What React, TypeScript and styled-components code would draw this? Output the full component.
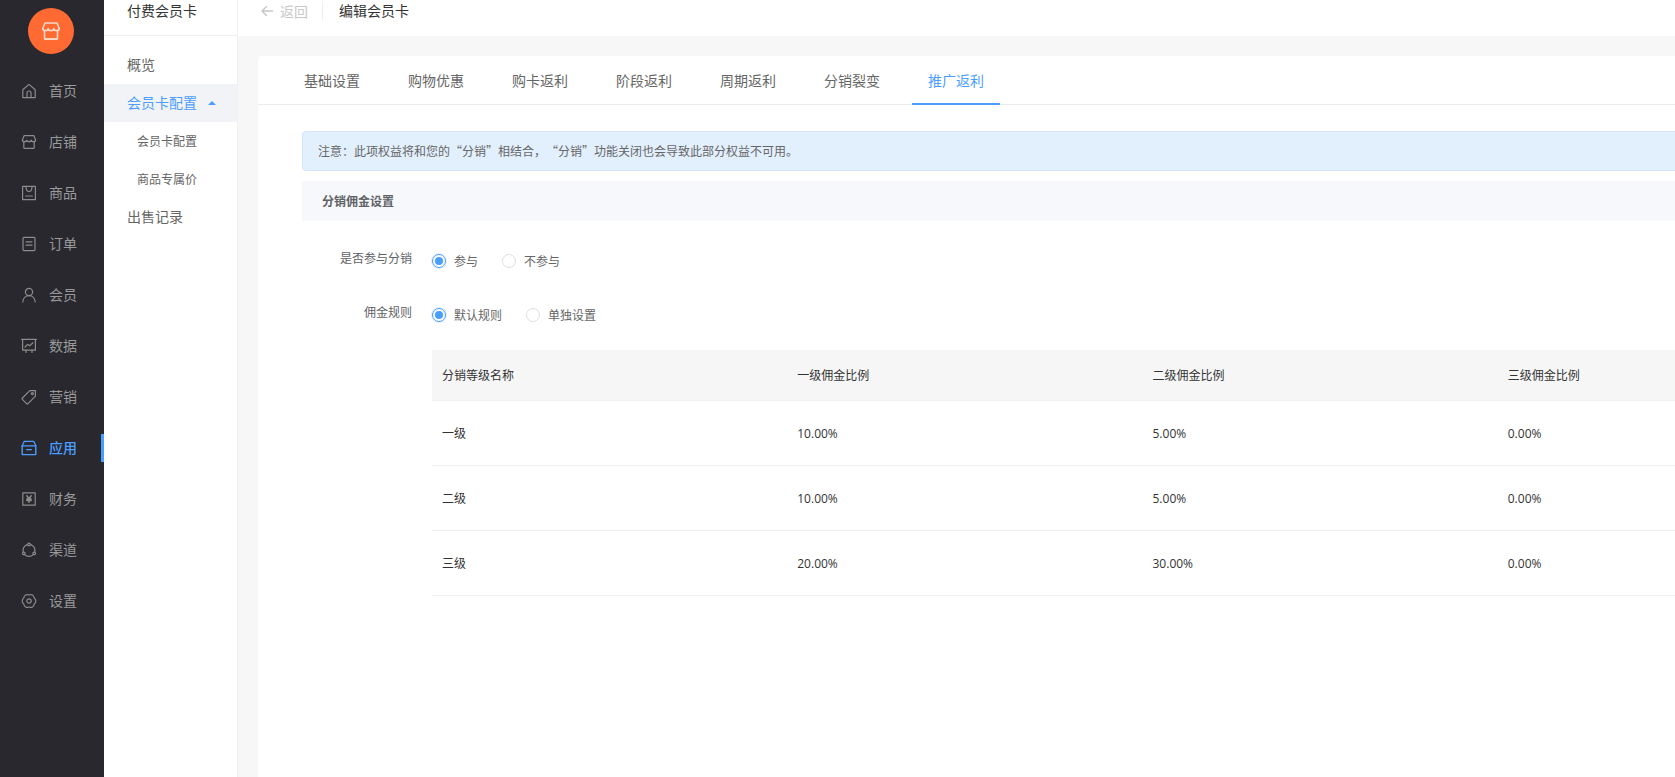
import React from "react";
import styled, { createGlobalStyle } from "styled-components";

const Global = createGlobalStyle`
  html, body { margin: 0; padding: 0; width: 100%; height: 100%; overflow: hidden; background: #f7f7f7; }
  body { font-family: "Open Sans", "Noto Sans CJK SC", sans-serif; font-size: 12px; color: #333; }
  * { box-sizing: border-box; }
`;

const Shell = styled.div`
  display: flex;
  width: 1675px;
  height: 777px;
  overflow: hidden;
`;

const Rail = styled.aside`
  flex: 0 0 104px;
  height: 100%;
  background: #28282e;
  display: flex;
  flex-direction: column;
`;

const Logo = styled.div`
  width: 46px;
  height: 46px;
  margin: 8px 0 0 28px;
  border-radius: 50%;
  background: #ff6a33;
  display: flex;
  align-items: center;
  justify-content: center;
`;

const RailList = styled.nav`
  display: flex;
  flex-direction: column;
  gap: 23px;
  margin-top: 23px;
`;

const RailItem = styled.div<{ $active?: boolean }>`
  position: relative;
  height: 28px;
  display: flex;
  align-items: center;
  gap: 13px;
  padding-left: 21px;
  font-family: "Noto Sans CJK SC", sans-serif;
  font-size: 14px;
  color: ${(p) => (p.$active ? "#4b9eff" : "#999999")};
  font-weight: ${(p) => (p.$active ? 500 : 400)};
  svg { color: ${(p) => (p.$active ? "#4b9eff" : "#8c8c8c")}; flex: none; }
  &::after {
    content: "";
    display: ${(p) => (p.$active ? "block" : "none")};
    position: absolute;
    right: 0;
    top: 0;
    width: 3px;
    height: 28px;
    background: #4b9eff;
  }
`;

const RailLabel = styled.span`
  margin-bottom: 2px;
  margin-left: -1px;
`;

const SubNav = styled.aside`
  flex: 0 0 134px;
  height: 100%;
  background: #fff;
  border-right: 1px solid #f0f0f0;
  font-family: "Noto Sans CJK SC", sans-serif;
`;

const SubTitle = styled.div`
  height: 36px;
  padding-left: 23px;
  line-height: 20px;
  font-size: 14px;
  color: #333;
  border-bottom: 1px solid #eeeeee;
`;

const SubList = styled.div`
  margin-top: 10px;
`;

const SubItem = styled.div<{ $active?: boolean; $child?: boolean }>`
  height: 38px;
  display: flex;
  align-items: center;
  padding-left: ${(p) => (p.$child ? "33px" : "23px")};
  padding-bottom: 2px;
  font-size: ${(p) => (p.$child ? "12px" : "14px")};
  color: ${(p) => (p.$active ? "#4b9eff" : "#666666")};
  background: ${(p) => (p.$active ? "#f2f3f7" : "transparent")};
`;

const Caret = styled.span`
  width: 0;
  height: 0;
  margin: 2px 0 0 11px;
  border-left: 4px solid transparent;
  border-right: 4px solid transparent;
  border-bottom: 4px solid #4b9eff;
`;

const Main = styled.main`
  flex: 1;
  min-width: 0;
  height: 100%;
  display: flex;
  flex-direction: column;
  overflow: hidden;
  background: #f7f7f7;
`;

const TopBar = styled.header`
  flex: 0 0 36px;
  background: #fff;
  display: flex;
  align-items: flex-start;
  padding-left: 22px;
  font-family: "Noto Sans CJK SC", sans-serif;
  font-size: 14px;
  line-height: 20px;
`;

const Back = styled.span`
  display: flex;
  align-items: center;
  gap: 6px;
  height: 19px;
  margin-top: 1px;
  color: #c8c8c8;
  padding-right: 14px;
  border-right: 1px solid #eeeeee;
`;

const Crumb = styled.span`
  margin-left: 16px;
  color: #333;
`;

const Body = styled.div`
  flex: 1;
  padding: 20px 0 0 20px;
  overflow: hidden;
`;

const Card = styled.section`
  width: 1900px;
  height: 100%;
  background: #fff;
  border-radius: 4px 0 0 0;
  font-family: "Noto Sans CJK SC", sans-serif;
`;

const Tabs = styled.div`
  height: 49px;
  display: flex;
  gap: 16px;
  padding-left: 30px;
  border-bottom: 1px solid #ebebeb;
`;

const Tab = styled.div<{ $active?: boolean }>`
  width: 88px;
  height: 49px;
  line-height: 48px;
  text-align: center;
  font-size: 14px;
  color: ${(p) => (p.$active ? "#4b9eff" : "#666666")};
  border-bottom: 2px solid ${(p) => (p.$active ? "#4b9eff" : "transparent")};
`;

const Content = styled.div`
  padding: 26px 0 0 44px;
`;

const Notice = styled.div`
  height: 40px;
  padding-left: 15px;
  line-height: 38px;
  font-size: 12px;
  color: #666666;
  background: #e2effd;
  border: 1px solid #d5e6fb;
  border-radius: 4px;
  text-spacing-trim: space-all;
`;

const Section = styled.div`
  height: 40px;
  margin-top: 10px;
  padding-left: 20px;
  line-height: 40px;
  font-size: 12px;
  font-weight: 700;
  color: #606266;
  background: #f7f8fc;
`;

const Field = styled.div<{ $top: number }>`
  display: flex;
  margin-top: ${(p) => p.$top}px;
`;

const FieldLabel = styled.div`
  width: 110px;
  line-height: 26px;
  text-align: right;
  font-size: 12px;
  color: #606266;
`;

const RadioGroup = styled.div`
  display: flex;
  align-items: center;
  gap: 24px;
  height: 32px;
  margin-left: 20px;
`;

const Radio = styled.label`
  display: flex;
  align-items: center;
  gap: 8px;
  font-size: 12px;
  color: #666666;
`;

const RadioText = styled.span`
  margin-bottom: 2px;
`;

const Dot = styled.span<{ $on?: boolean }>`
  width: 14px;
  height: 14px;
  border-radius: 50%;
  border: 1px solid ${(p) => (p.$on ? "#4b9eff" : "#dcdee2")};
  box-shadow: ${(p) => (p.$on ? "0 0 0 1px rgba(75,158,255,0.18)" : "none")};
  display: flex;
  align-items: center;
  justify-content: center;
  &::after {
    content: "";
    width: 8px;
    height: 8px;
    border-radius: 50%;
    background: ${(p) => (p.$on ? "#4b9eff" : "transparent")};
  }
`;

const Table = styled.table`
  width: 1421px;
  margin: 19px 0 0 130px;
  table-layout: fixed;
  border-collapse: collapse;
  font-size: 12px;
  color: #333;
`;

const Th = styled.th`
  height: 50px;
  padding: 0 10px;
  text-align: left;
  font-weight: 400;
  background: #f6f6f6;
  border-bottom: 1px solid #f0f0f0;
`;

const Td = styled.td`
  height: 65px;
  padding: 0 10px;
  font-family: "Open Sans", "Noto Sans CJK SC", sans-serif;
  border-bottom: 1px solid #efefef;
  & + & { padding-top: 2px; }
`;

const Icon: React.FC<{ children: React.ReactNode }> = ({ children }) => (
  <svg width={16} height={16} viewBox="0 0 16 16" fill="none" stroke="currentColor" strokeWidth="1.2" strokeLinejoin="round" strokeLinecap="round">
    {children}
  </svg>
);

const StorePath = () => (
  <>
    <path d="M1.4 6 3.2 1.6h9.6L14.6 6" />
    <path d="M14.6 6a2.2 1.7 0 0 1-4.4 0 2.2 1.7 0 0 1-4.4 0 2.2 1.7 0 0 1-4.4 0" />
    <path d="M2.8 7.8v5.6a1 1 0 0 0 1 1h8.4a1 1 0 0 0 1-1V7.8" />
  </>
);

const icons: Record<string, React.ReactNode> = {
  home: (
    <>
      <path d="M1.8 6.8 8 1.4l6.2 5.4v7.8H1.8z" />
      <path d="M6 14.6V10a2 2 0 0 1 4 0v4.6" />
    </>
  ),
  store: <StorePath />,
  goods: (
    <>
      <rect x="1.6" y="1.4" width="12.8" height="13.2" />
      <path d="M5 1.6c0 4 1.2 5 3 5s3-1 3-5M4.6 11h6.8" />
    </>
  ),
  order: (
    <>
      <rect x="2" y="1.4" width="12" height="13.2" rx="1" />
      <path d="M5 5.8h6M5 9.2h6" />
    </>
  ),
  user: (
    <>
      <circle cx="8" cy="5" r="3.6" />
      <path d="M1.8 15c.2-3.8 2.8-6.4 6.2-6.4s6 2.6 6.2 6.4" />
    </>
  ),
  data: (
    <>
      <path d="M0.6 1.4h14.8M1.6 1.4v10.8h12.8V1.4" />
      <path d="M4 9l2.6-2.6 2 1.4L12 4.8M5 12.2v2.2M11 12.2v2.2" />
    </>
  ),
  tag: (
    <>
      <path d="M8.8 1.6h5.6v5.6l-7.4 7.4a1 1 0 0 1-1.4 0L1.4 10.4a1 1 0 0 1 0-1.4z" />
      <circle cx="11.4" cy="4.6" r="1" />
    </>
  ),
  app: (
    <>
      <path d="M3.2 1.4h9.6l2 4.4H1.2z" />
      <path d="M1.2 5.8v8.8h13.6V5.8M5.6 9.6h4.8" strokeWidth="1.4" />
    </>
  ),
  money: (
    <>
      <rect x="1.8" y="1.8" width="12.4" height="12.4" />
      <path d="M5.8 4.8 8 7.4l2.2-2.6M8 7.4v3.8M5.8 8h4.4M5.8 9.6h4.4" strokeWidth="1.5" />
    </>
  ),
  channel: (
    <>
      <circle cx="8" cy="8.4" r="6" />
      <circle cx="8" cy="2.4" r="1.3" fill="#28282e" />
      <circle cx="2.8" cy="11.4" r="1.3" fill="#28282e" />
      <circle cx="13.2" cy="11.4" r="1.3" fill="#28282e" />
    </>
  ),
  gear: (
    <>
      <path d="M8 2a3.6 3.6 0 0 1 5.2 3 3.6 3.6 0 0 1 0 6A3.6 3.6 0 0 1 8 14a3.6 3.6 0 0 1-5.2-3 3.6 3.6 0 0 1 0-6A3.6 3.6 0 0 1 8 2z" />
      <circle cx="8" cy="8" r="2.2" />
    </>
  ),
};

const rail = [
  ["home", "首页"],
  ["store", "店铺"],
  ["goods", "商品"],
  ["order", "订单"],
  ["user", "会员"],
  ["data", "数据"],
  ["tag", "营销"],
  ["app", "应用"],
  ["money", "财务"],
  ["channel", "渠道"],
  ["gear", "设置"],
];

const tabs = ["基础设置", "购物优惠", "购卡返利", "阶段返利", "周期返利", "分销裂变", "推广返利"];
const heads = ["分销等级名称", "一级佣金比例", "二级佣金比例", "三级佣金比例"];
const rows = [
  ["一级", "10.00%", "5.00%", "0.00%"],
  ["二级", "10.00%", "5.00%", "0.00%"],
  ["三级", "20.00%", "30.00%", "0.00%"],
];

const notice = "注意\uFF1A此项权益将和您的\u201C分销\u201D相结合\uFF0C\u201C分销\u201D功能关闭也会导致此部分权益不可用。";

const BackArrow = () => (
  <svg width="14" height="14" viewBox="0 0 14 14" fill="none" stroke="currentColor" strokeWidth="1.5" strokeLinecap="round" strokeLinejoin="round">
    <path d="M12.5 7H2M6.5 2.5 2 7l4.5 4.5" />
  </svg>
);

export default function App() {
  return (
    <Shell>
      <Global />
      <Rail>
        <Logo>
          <svg width="20" height="20" viewBox="0 0 16 16" fill="none" stroke="#ffdccd" strokeWidth="1.2" strokeLinejoin="round" strokeLinecap="round">
            <StorePath />
            <path d="M2.8 14.4h10.4" />
          </svg>
        </Logo>
        <RailList>
          {rail.map(([icon, label]) => (
            <RailItem key={label} $active={label === "应用"}>
              <Icon>{icons[icon]}</Icon>
              <RailLabel>{label}</RailLabel>
            </RailItem>
          ))}
        </RailList>
      </Rail>
      <SubNav>
        <SubTitle>付费会员卡</SubTitle>
        <SubList>
          <SubItem>概览</SubItem>
          <SubItem $active>
            会员卡配置
            <Caret />
          </SubItem>
          <SubItem $child>会员卡配置</SubItem>
          <SubItem $child>商品专属价</SubItem>
          <SubItem>出售记录</SubItem>
        </SubList>
      </SubNav>
      <Main>
        <TopBar>
          <Back>
            <BackArrow />
            返回
          </Back>
          <Crumb>编辑会员卡</Crumb>
        </TopBar>
        <Body>
          <Card>
            <Tabs>
              {tabs.map((t) => (
                <Tab key={t} $active={t === "推广返利"}>
                  {t}
                </Tab>
              ))}
            </Tabs>
            <Content>
              <Notice>{notice}</Notice>
              <Section>分销佣金设置</Section>
              <Field $top={24}>
                <FieldLabel>是否参与分销</FieldLabel>
                <RadioGroup>
                  <Radio>
                    <Dot $on />
                    <RadioText>参与</RadioText>
                  </Radio>
                  <Radio>
                    <Dot />
                    <RadioText>不参与</RadioText>
                  </Radio>
                </RadioGroup>
              </Field>
              <Field $top={22}>
                <FieldLabel>佣金规则</FieldLabel>
                <RadioGroup>
                  <Radio>
                    <Dot $on />
                    <RadioText>默认规则</RadioText>
                  </Radio>
                  <Radio>
                    <Dot />
                    <RadioText>单独设置</RadioText>
                  </Radio>
                </RadioGroup>
              </Field>
              <Table>
                <thead>
                  <tr>
                    {heads.map((h) => (
                      <Th key={h}>{h}</Th>
                    ))}
                  </tr>
                </thead>
                <tbody>
                  {rows.map((r) => (
                    <tr key={r[0]}>
                      {r.map((c, i) => (
                        <Td key={i}>{c}</Td>
                      ))}
                    </tr>
                  ))}
                </tbody>
              </Table>
            </Content>
          </Card>
        </Body>
      </Main>
    </Shell>
  );
}
